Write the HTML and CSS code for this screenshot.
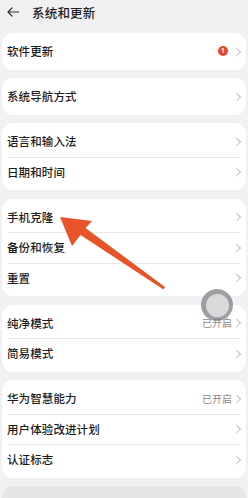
FILE: index.html
```html
<!DOCTYPE html>
<html lang="zh-CN">
<head>
<meta charset="utf-8">
<link rel="stylesheet" href="styles.css">
</head>
<body>
<div class="page">
  <header class="header">
    <svg class="back" width="12" height="10" viewBox="0 0 12 10"><path d="M5 1 L1 5 L5 9 M1 5 H11.5" fill="none" stroke="#333" stroke-width="1.2" stroke-linecap="round" stroke-linejoin="round"/></svg>
    <span class="title">系统和更新</span>
  </header>
  <main class="list">
    <section class="card">
      <div class="row"><span class="label">软件更新</span><span class="badge">1</span><span class="chev"></span></div>
    </section>
    <section class="card">
      <div class="row"><span class="label">系统导航方式</span><span class="chev"></span></div>
    </section>
    <section class="card">
      <div class="row"><span class="label">语言和输入法</span><span class="chev"></span></div>
      <div class="row"><span class="label">日期和时间</span><span class="chev"></span></div>
    </section>
    <section class="card">
      <div class="row"><span class="label">手机克隆</span><span class="chev"></span></div>
      <div class="row"><span class="label">备份和恢复</span><span class="chev"></span></div>
      <div class="row"><span class="label">重置</span><span class="chev"></span></div>
    </section>
    <section class="card">
      <div class="row"><span class="label">纯净模式</span><span class="value">已开启</span><span class="chev"></span></div>
      <div class="row"><span class="label">简易模式</span><span class="chev"></span></div>
    </section>
    <section class="card">
      <div class="row"><span class="label">华为智慧能力</span><span class="value">已开启</span><span class="chev"></span></div>
      <div class="row"><span class="label">用户体验改进计划</span><span class="chev"></span></div>
      <div class="row"><span class="label">认证标志</span><span class="chev"></span></div>
    </section>
    <section class="card card-gray"></section>
  </main>
  <svg class="arrow" width="248" height="498" viewBox="0 0 248 498">
    <polygon points="60,217 92,221 85.5,228 165,287 163.5,289.5 80.5,235 72,246" fill="#e8542a"/>
  </svg>
  <div class="float-btn"><div class="float-inner"></div></div>
</div>
</body>
</html>
```
FILE: styles.css
```css
* { box-sizing: border-box; }
html, body { margin: 0; padding: 0; }
body {
  background: #f1f1f3;
  font-family: "Noto Sans CJK SC", "Noto Sans", sans-serif;
  color: #1c1c1e;
  width: 248px;
  height: 498px;
  overflow: hidden;
}
.page { position: relative; width: 248px; height: 498px; overflow: hidden; }
.header {
  height: 24px;
  display: flex;
  align-items: center;
  padding-left: 7px;
}
.back { display: block; margin-right: 13px; }
.title { font-size: 12.5px; font-weight: 500; color: #222; letter-spacing: 0.2px; }
.list {
  margin-top: 9px;
  padding: 0 2px;
  display: flex;
  flex-direction: column;
  gap: 8.5px;
}
.card {
  background: #fff;
  border-radius: 11px;
  padding: 3px 0;
}
.card-gray { background: #e6e6e8; height: 30px; }
.row {
  position: relative;
  height: 30.5px;
  display: flex;
  align-items: center;
  padding: 0 6px 0 5px;
}
.row + .row::before {
  content: "";
  position: absolute;
  left: 5px;
  right: 5px;
  top: 0;
  border-top: 1px solid #e8e8ea;
}
.label { flex: 1; font-size: 11.5px; font-weight: 500; letter-spacing: 0.1px; }
.value { font-size: 10px; color: #8a8a8e; margin-right: 3px; }
.badge {
  width: 10px; height: 10px; border-radius: 50%;
  background: #e8462c; color: #fff;
  font-size: 7px; line-height: 10px; text-align: center;
  font-family: "Roboto", sans-serif; font-weight: 700;
  margin-right: 7px;
}
.chev {
  width: 5px; height: 8px;
  position: relative;
}
.chev::after {
  content: "";
  position: absolute;
  left: -1px; top: 1.5px;
  width: 4.5px; height: 4.5px;
  border-top: 1.2px solid #bdbdc2;
  border-right: 1.2px solid #bdbdc2;
  transform: rotate(45deg);
}
.arrow { position: absolute; left: 0; top: 0; pointer-events: none; }
.float-btn {
  position: absolute;
  left: 201px; top: 289px;
  width: 32px; height: 32px;
  border-radius: 50%;
  background: rgba(120,120,124,0.7);
  display: flex; align-items: center; justify-content: center;
}
.float-inner {
  width: 23px; height: 23px; border-radius: 50%;
  background: #d9d9db;
}
```
